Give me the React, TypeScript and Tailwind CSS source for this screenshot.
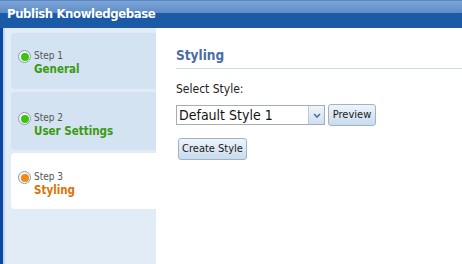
const Step = ({
  n,
  label,
  active,
  className,
}: {
  n: number;
  label: string;
  active?: boolean;
  className: string;
}) => (
  <div className={`flex items-start gap-[3px] pl-[7px] ${className}`}>
    <div className="mt-[1px] flex h-[13px] w-[13px] items-center justify-center rounded-full border border-[#8a9bb0] bg-[#f4f6f8]">
      <div
        className={`h-[8px] w-[8px] rounded-full ${
          active ? 'bg-[#f08a10]' : 'bg-[#3cc40c]'
        }`}
      />
    </div>
    <div className="flex flex-col">
      <span className="text-[10px] leading-[13px] text-[#555]">Step {n}</span>
      <span
        className={`text-[11.5px] font-bold leading-[14px] ${
          active ? 'text-[#dd7206]' : 'text-[#3c9a0e]'
        }`}
      >
        {label}
      </span>
    </div>
  </div>
);

const Btn = ({ children, className }: { children: string; className?: string }) => (
  <button
    className={`h-[22px] whitespace-nowrap rounded-[3px] border border-[#9fb3c8] bg-gradient-to-b from-[#eef4fa] to-[#c9dbee] px-[3px] text-[11px] text-[#1a1a1a] ${className ?? ''}`}
  >
    {children}
  </button>
);

export default function App() {
  return (
    <div
      className="flex h-[264px] w-[462px] flex-col overflow-hidden bg-white"
      style={{ fontFamily: '"DejaVu Sans Condensed", "Liberation Sans", sans-serif' }}
    >
      <div className="relative h-[28px] shrink-0 bg-[#1b5aa6]">
        <div className="h-[13px] border-t border-[#5b88c4] bg-gradient-to-b from-[#7da5d6] to-[#5d8cc7]" />
        <span className="absolute left-[7px] top-[6px] text-[13px] font-bold leading-[16px] tracking-[-0.4px] text-white">
          Publish Knowledgebase
        </span>
      </div>
      <div className="flex flex-1">
        <div className="flex w-[156px] shrink-0">
          <div className="w-[3px] bg-[#0d47a5]" />
          <div className="w-[2px] bg-[#c3d7ec]" />
          <div className="flex flex-1 flex-col gap-[3px] bg-[#e1ecf7] pl-[6px] pt-[5px]">
            <Step n={1} label="General" className="h-[56px] rounded-l-[4px] bg-[#d3e3f2] pt-[16px]" />
            <Step n={2} label="User Settings" className="h-[58px] rounded-l-[4px] bg-[#d3e3f2] pt-[19px]" />
            <Step n={3} label="Styling" active className="h-[56px] rounded-l-[4px] bg-white pt-[17px]" />
          </div>
        </div>
        <div className="flex flex-1 flex-col pl-[20px] pt-[18px]">
          <div className="border-b border-[#c9ddf0] pb-[4px] text-[13.5px] font-bold leading-[18px] text-[#4a6ea6]">
            Styling
          </div>
          <div className="mt-[12px] text-[12px] leading-[16px] text-[#222]">Select Style:</div>
          <div className="mt-[7px] flex items-center gap-[3px]">
            <div className="flex h-[20px] w-[149px] items-stretch border border-[#a5acb5] bg-white">
              <span className="flex-1 whitespace-nowrap pl-[2px] text-[14px] leading-[18px] text-[#111]">
                Default Style 1
              </span>
              <div className="flex w-[16px] items-center justify-center border-l border-[#b7c9dc] bg-gradient-to-b from-[#eef4fa] to-[#cfdff0]">
                <svg width="8" height="5" viewBox="0 0 8 5">
                  <path d="M1 1 L4 4 L7 1" fill="none" stroke="#4d6f99" strokeWidth="1.6" />
                </svg>
              </div>
            </div>
            <Btn className="w-[48px]">Preview</Btn>
          </div>
          <div className="mt-[9px] pl-[2px]">
            <Btn className="w-[69px]">Create Style</Btn>
          </div>
        </div>
      </div>
    </div>
  );
}
